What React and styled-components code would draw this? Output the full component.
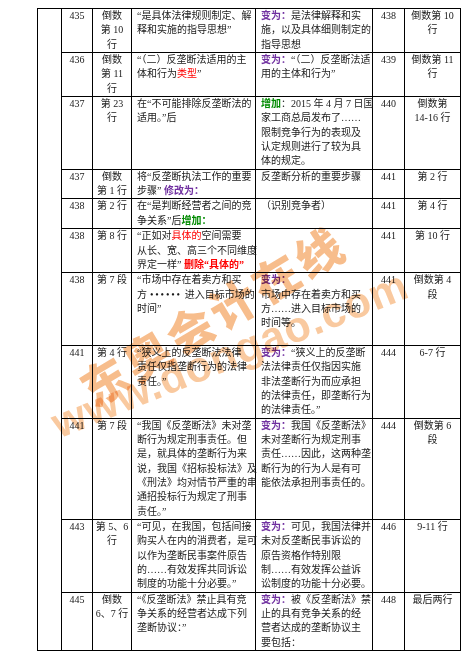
import React from 'react';
import styled, { createGlobalStyle } from 'styled-components';

const GlobalStyle = createGlobalStyle`
  html, body {
    margin: 0;
    padding: 0;
    background: #fff;
  }
  body {
    font-family: "Liberation Serif", "Noto Sans CJK SC", serif;
    color: #1a1a1a;
  }
`;

const Page = styled.div`
  position: relative;
  width: 468px;
  height: 660px;
  padding: 8px 0 0 37px;
  box-sizing: border-box;
  overflow: hidden;
`;

const Table = styled.table`
  border-collapse: collapse;
  table-layout: fixed;
  width: 423px;
  font-size: 10px;
  line-height: 14.35px;
`;

const Cell = styled.td`
  border: 1px solid #000;
  vertical-align: top;
  padding: ${props => (props.$center ? '0' : '0 1px 0 5px')};
  text-align: ${props => (props.$center ? 'center' : 'left')};
  overflow: visible;
`;

const Line = styled.span`
  display: block;
  white-space: nowrap;
  min-height: 14.35px;
`;

const Dots = styled.span`
  letter-spacing: 1.8px;
  margin: 0 3px;
`;

const tones = {
  purple: '#7030a0',
  green: '#008a00',
  red: '#ff0000',
};

const Mark = styled.span`
  color: ${props => tones[props.$tone]};
  font-weight: ${props => (props.$bold ? 700 : 400)};
`;

const Watermark = styled.div`
  position: absolute;
  left: ${props => props.$x}px;
  top: ${props => props.$y}px;
  transform: translate(-50%, -50%) rotate(${props => props.$angle}deg);
  white-space: nowrap;
  font-family: ${props => props.$latin ? '"Liberation Sans", sans-serif' : '"Noto Sans CJK SC", sans-serif'};
  font-weight: 900;
  font-size: ${props => props.$size}px;
  letter-spacing: ${props => props.$spacing}px;
  color: ${props => props.$color};
  mix-blend-mode: multiply;
  pointer-events: none;
  line-height: 1;
`;

const P = ({ children }) => <Mark $tone="purple" $bold>{children}</Mark>;
const G = ({ children }) => <Mark $tone="green" $bold>{children}</Mark>;
const R = ({ children, bold }) => <Mark $tone="red" $bold={bold}>{children}</Mark>;

const rows = [
  {
    page: '435',
    at: ['倒数', '第 10', '行'],
    before: ['“是具体法律规则制定、解', '释和实施的指导思想”'],
    after: [<><P>变为：</P>是法律解释和实</>, '施，以及具体细则制定的', '指导思想'],
    newPage: '438',
    newAt: ['倒数第 10', '行'],
  },
  {
    page: '436',
    at: ['倒数', '第 11', '行'],
    before: ['“（二）反垄断法适用的主', <>体和行为<R>类型</R>”</>],
    after: [<><P>变为：</P>“（二）反垄断法适</>, '用的主体和行为”'],
    newPage: '439',
    newAt: ['倒数第 11', '行'],
  },
  {
    page: '437',
    at: ['第 23', '行'],
    before: ['在“不可能排除反垄断法的', '适用。”后'],
    after: [
      <><G>增加</G>：2015 年 4 月 7 日国</>,
      '家工商总局发布了……',
      '限制竞争行为的表现及',
      '认定规则进行了较为具',
      '体的规定。',
    ],
    newPage: '440',
    newAt: ['倒数第', '14-16 行'],
  },
  {
    page: '437',
    at: ['倒数', '第 1 行'],
    before: ['将“反垄断执法工作的重要', <>步骤” <P>修改为：</P></>],
    after: ['反垄断分析的重要步骤'],
    newPage: '441',
    newAt: ['第 2 行'],
  },
  {
    page: '438',
    at: ['第 2 行'],
    before: ['在“是判断经营者之间的竞', <>争关系”后<G>增加：</G></>],
    after: ['（识别竞争者）'],
    newPage: '441',
    newAt: ['第 4 行'],
  },
  {
    page: '438',
    at: ['第 8 行'],
    before: [
      <> “正如对<R>具体的</R>空间需要</>,
      '从长、宽、高三个不同维度',
      <>界定一样” <R bold>删除“具体的”</R></>,
    ],
    after: [],
    newPage: '441',
    newAt: ['第 10 行'],
  },
  {
    page: '438',
    at: ['第 7 段'],
    before: [' “市场中存在着卖方和买', <>方<Dots>••••••</Dots>进入目标市场的</>, '时间”'],
    after: [<P>变为：</P>, '市场中存在着卖方和买', '方……进入目标市场的', '时间等。', ''],
    newPage: '441',
    newAt: ['倒数第 4', '段'],
  },
  {
    page: '441',
    at: ['第 4 行'],
    before: [' “狭义上的反垄断法法律', '责任仅指垄断行为的法律', '责任。”'],
    after: [
      <><P>变为：</P>“狭义上的反垄断</>,
      '法法律责任仅指因实施',
      '非法垄断行为而应承担',
      '的法律责任，即垄断行为',
      '的法律责任。”',
    ],
    newPage: '444',
    newAt: ['6-7 行'],
  },
  {
    page: '441',
    at: ['第 7 段'],
    before: [
      ' “我国《反垄断法》未对垄',
      '断行为规定刑事责任。但',
      '是，就具体的垄断行为来',
      '说，我国《招标投标法》及',
      '《刑法》均对情节严重的串',
      '通招投标行为规定了刑事',
      '责任。”',
    ],
    after: [
      <><P>变为：</P>我国《反垄断法》</>,
      '未对垄断行为规定刑事',
      '责任……因此，这两种垄',
      '断行为的行为人是有可',
      '能依法承担刑事责任的。',
    ],
    newPage: '444',
    newAt: ['倒数第 6', '段'],
  },
  {
    page: '443',
    at: ['第 5、6', '行'],
    before: [
      ' “可见，在我国，包括间接',
      '购买人在内的消费者，是可',
      '以作为垄断民事案件原告',
      '的……有效发挥共同诉讼',
      '制度的功能十分必要。”',
    ],
    after: [
      <><P>变为：</P>可见，我国法律并</>,
      '未对反垄断民事诉讼的',
      '原告资格作特别限',
      '制……有效发挥公益诉',
      '讼制度的功能十分必要。',
    ],
    newPage: '446',
    newAt: ['9-11 行'],
  },
  {
    page: '445',
    at: ['倒数', '6、7 行'],
    before: [' “《反垄断法》禁止具有竞', '争关系的经营者达成下列', '垄断协议：”'],
    after: [
      <><P>变为：</P>被《反垄断法》禁</>,
      '止的具有竞争关系的经',
      '营者达成的垄断协议主',
      '要包括：',
    ],
    newPage: '448',
    newAt: ['最后两行'],
  },
];

function Lines({ items }) {
  return items.map((item, index) => <Line key={`line-${index}`}>{item}</Line>);
}

export default function App() {
  return (
    <Page>
      <GlobalStyle />
      <Table>
        <colgroup>
          <col style={{ width: 24 }} />
          <col style={{ width: 31 }} />
          <col style={{ width: 39 }} />
          <col style={{ width: 124 }} />
          <col style={{ width: 117 }} />
          <col style={{ width: 32 }} />
          <col style={{ width: 56 }} />
        </colgroup>
        <tbody>
          {rows.map((row, index) => (
            <tr key={`row-${index}`}>
              {index === 0 && <Cell rowSpan={rows.length} />}
              <Cell $center>{row.page}</Cell>
              <Cell $center><Lines items={row.at} /></Cell>
              <Cell><Lines items={row.before} /></Cell>
              <Cell><Lines items={row.after} /></Cell>
              <Cell $center>{row.newPage}</Cell>
              <Cell $center><Lines items={row.newAt} /></Cell>
            </tr>
          ))}
        </tbody>
      </Table>
      <Watermark $x={212} $y={314} $angle={-31} $size={46} $spacing={4} $color="rgba(244, 164, 96, 0.72)">
        东奥会计在线
      </Watermark>
      <Watermark $latin $x={230} $y={354} $angle={-22} $size={43} $spacing={1} $color="rgba(246, 178, 118, 0.7)">
        www.dongao.com
      </Watermark>
    </Page>
  );
}
